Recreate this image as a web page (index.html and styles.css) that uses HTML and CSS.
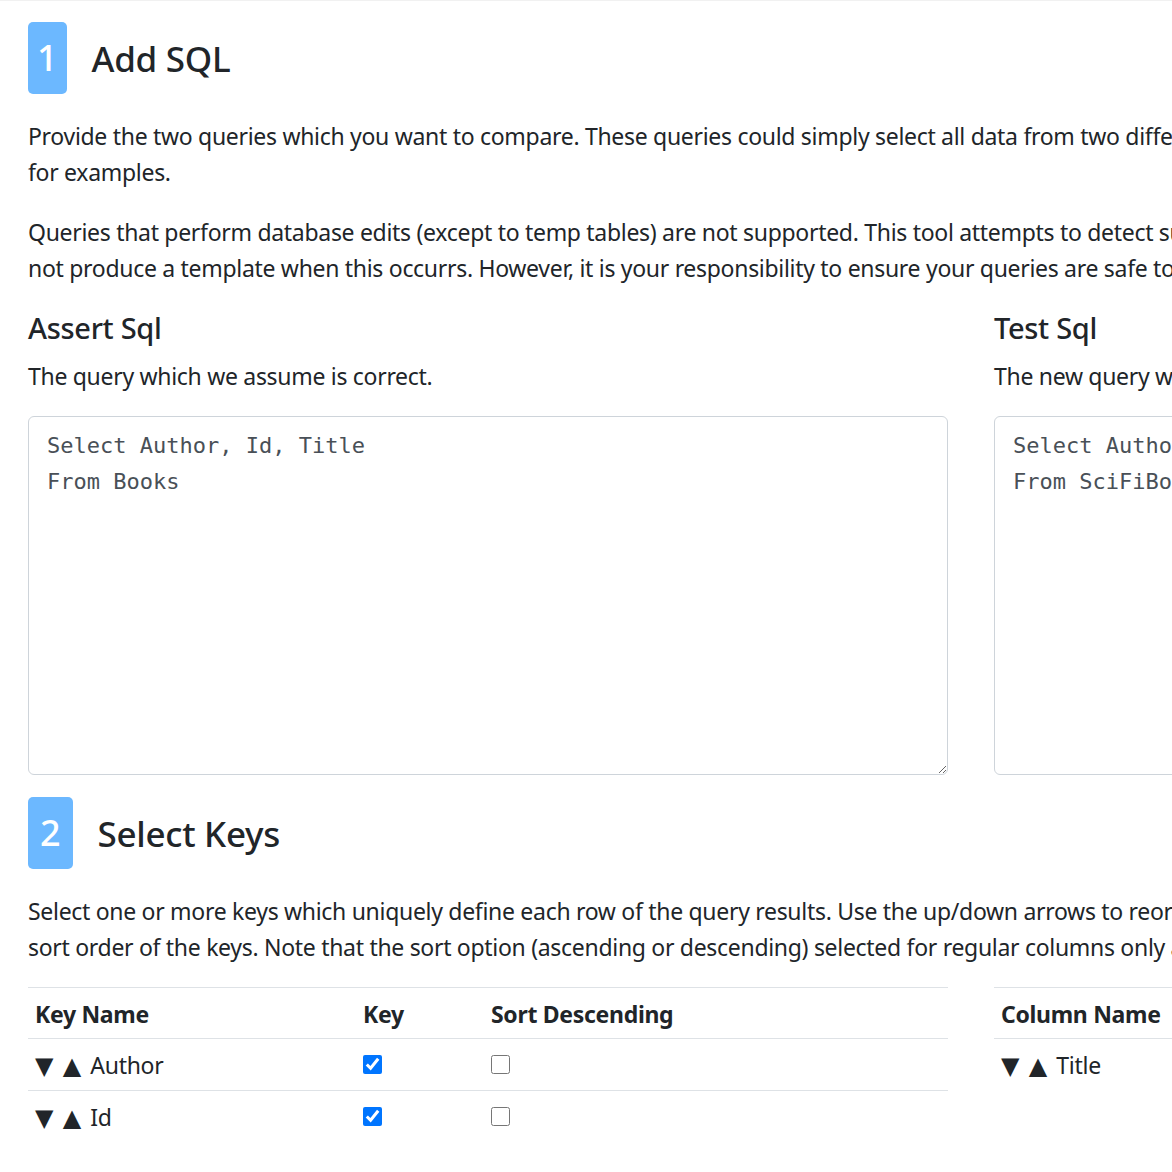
FILE: index.html
```html
<!DOCTYPE html>
<html lang="en">
<head>
<meta charset="utf-8">
<title>Compare SQL</title>
<link rel="stylesheet" href="styles.css">
</head>
<body>
<div class="top-rule"></div>
<main class="page">
  <section class="step">
    <div class="step-head">
      <span class="badge">1</span>
      <h2 class="step-title">Add SQL</h2>
    </div>
    <p class="lead-text">Provide the two queries which you want to compare. These queries could simply select all data from two different tables, or could be much more complex queries. See the demo page<br>for examples.</p>
    <p class="lead-text">Queries that perform database edits (except to temp tables) are not supported. This tool attempts to detect such queries and will<br>not produce a template when this occurrs. However, it is your responsibility to ensure your queries are safe to run.</p>
    <div class="cols">
      <div class="col">
        <h5 class="col-title">Assert Sql</h5>
        <p class="col-text">The query which we assume is correct.</p>
        <textarea class="sql-box" spellcheck="false">Select Author, Id, Title
From Books</textarea>
      </div>
      <div class="col">
        <h5 class="col-title">Test Sql</h5>
        <p class="col-text">The new query which we want to test.</p>
        <textarea class="sql-box" spellcheck="false">Select Author, Id, Title
From SciFiBooks</textarea>
      </div>
    </div>
  </section>

  <section class="step">
    <div class="step-head">
      <span class="badge badge-wide">2</span>
      <h2 class="step-title">Select Keys</h2>
    </div>
    <p class="lead-text last">Select one or more keys which uniquely define each row of the query results. Use the up/down arrows to reorder the<br>sort order of the keys. Note that the sort option (ascending or descending) selected for regular columns only applies to the keys.</p>
    <div class="cols">
      <div class="col">
        <table class="grid">
          <colgroup>
            <col class="c-name"><col class="c-key"><col class="c-sort">
          </colgroup>
          <thead>
            <tr><th>Key Name</th><th>Key</th><th>Sort Descending</th></tr>
          </thead>
          <tbody>
            <tr>
              <td><span class="arrow">▼</span> <span class="arrow">▲</span> Author</td>
              <td><input type="checkbox" class="check" checked></td>
              <td><input type="checkbox" class="check"></td>
            </tr>
            <tr>
              <td><span class="arrow">▼</span> <span class="arrow">▲</span> Id</td>
              <td><input type="checkbox" class="check" checked></td>
              <td><input type="checkbox" class="check"></td>
            </tr>
          </tbody>
        </table>
      </div>
      <div class="col">
        <table class="grid">
          <colgroup>
            <col class="c-name"><col class="c-key"><col class="c-sort">
          </colgroup>
          <thead>
            <tr><th>Column Name</th><th>Key</th><th>Sort Descending</th></tr>
          </thead>
          <tbody>
            <tr>
              <td><span class="arrow">▼</span> <span class="arrow">▲</span> Title</td>
              <td><input type="checkbox" class="check"></td>
              <td><input type="checkbox" class="check"></td>
            </tr>
          </tbody>
        </table>
      </div>
    </div>
  </section>
</main>
</body>
</html>
```
FILE: styles.css
```css
html, body {
  margin: 0;
  padding: 0;
  background: #fff;
  overflow: hidden;
}

body {
  font-family: "Noto Sans", "Open Sans", sans-serif;
  font-size: 23px;
  line-height: 36px;
  letter-spacing: -0.3px;
  color: #212529;
}

.top-rule {
  height: 1px;
  background: #f1f1f1;
}

.page {
  width: 1886px;
  padding: 21px 0 0 28px;
}

.step-head {
  display: flex;
  align-items: center;
  gap: 25px;
  height: 72px;
  margin-bottom: 24px;
}

.badge {
  height: 72px;
  padding: 0 9px;
  display: flex;
  align-items: center;
  justify-content: center;
  background: #6cb8ff;
  color: #fff;
  border-radius: 5px;
  font-size: 36px;
  font-weight: 500;
  letter-spacing: 0;
}

.badge-wide {
  padding: 0 12px;
}

.step-title {
  margin: 0;
  font-size: 35px;
  line-height: 43px;
  font-weight: 500;
}

.lead-text {
  margin: 0 0 24px;
  white-space: nowrap;
}

.lead-text.last {
  margin-bottom: 22px;
}

.cols {
  display: grid;
  grid-template-columns: 920px 920px;
  column-gap: 46px;
}

.col {
  min-width: 0;
}

.col-title {
  margin: 0 0 12px;
  font-size: 29px;
  line-height: 36px;
  font-weight: 500;
}

.col-text {
  margin: 0 0 22px;
  white-space: nowrap;
}

.sql-box {
  display: block;
  box-sizing: border-box;
  width: 920px;
  height: 359px;
  margin: 0 0 22px;
  padding: 11px 18px 7px;
  border: 1px solid #ced4da;
  border-radius: 6px;
  font-family: "DejaVu Sans Mono", "Liberation Mono", monospace;
  font-size: 22px;
  line-height: 36px;
  letter-spacing: 0;
  color: #495057;
  background: #fff;
  outline: none;
}

.grid {
  width: 920px;
  border-collapse: collapse;
  table-layout: fixed;
}

.c-name { width: 328px; }
.c-key { width: 128px; }
.c-sort { width: 464px; }

.grid th,
.grid td {
  padding: 8px 7px 6px;
  border-top: 1px solid #dee2e6;
  text-align: left;
  vertical-align: top;
  white-space: nowrap;
}

.grid th {
  font-weight: 700;
}

.arrow {
  display: inline-block;
  width: 18px;
  margin-right: 4px;
  font-family: "DejaVu Sans", sans-serif;
  font-size: 24px;
  letter-spacing: 0;
}

.check {
  width: 19px;
  height: 19px;
  margin: 8px 0 0;
  vertical-align: top;
}
```
